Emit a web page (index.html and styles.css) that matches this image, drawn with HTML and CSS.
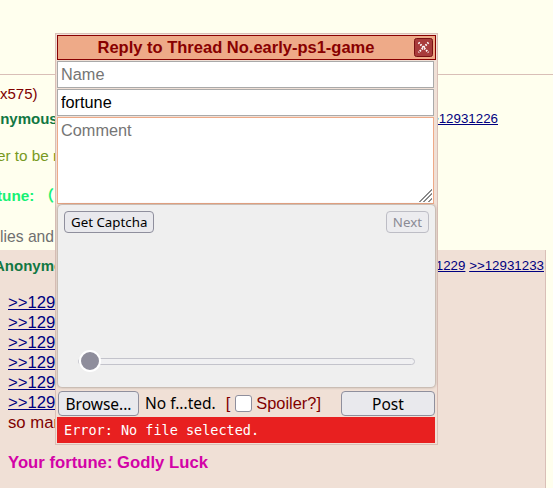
FILE: index.html
```html
<!DOCTYPE html>
<html>
<head>
<meta charset="utf-8">
<link rel="stylesheet" href="styles.css">
</head>
<body>
<div class="thread">
  <div class="board-top"></div>
  <hr class="sep">
  <div class="op">
    <div class="file-info">x575)</div>
    <div class="post-info">
      <span class="name op-name">Anonymous</span>
      <span class="dateline">01/13/24(Sat)18:22 No.12931217</span>
      <span class="backlink op-backlink"><a href="#">&gt;&gt;12931226</a></span>
    </div>
    <div class="op-msg">
      <div class="greentext">er to be remembered as the best</div>
      <div class="fortune-ok">tune: （　´_ゝ`）ﾌｰﾝ</div>
    </div>
    <div class="summary">lies and 2 images omitted. Click here to view.</div>
  </div>
  <div class="reply">
    <div class="reply-info">
      <span class="name reply-name">Anonymous</span>
      <span class="dateline">01/13/24(Sat)18:40 No.12931240</span>
      <span class="backlink reply-backlinks"><a href="#">&gt;&gt;12931229</a> <a href="#">&gt;&gt;12931233</a></span>
    </div>
    <blockquote class="reply-msg">
      <a href="#">&gt;&gt;12931180</a><br>
      <a href="#">&gt;&gt;12931185</a><br>
      <a href="#">&gt;&gt;12931191</a><br>
      <a href="#">&gt;&gt;12931198</a><br>
      <a href="#">&gt;&gt;12931204</a><br>
      <a href="#">&gt;&gt;12931210</a><br>
      so many good games back then<br>
      <br>
      <b class="godly">Your fortune: Godly Luck</b>
    </blockquote>
  </div>
</div>

<form class="qr">
  <div class="qr-head">
    <span class="qr-title">Reply to Thread No.early-ps1-game</span>
    <button type="button" class="qr-close" aria-label="Close">
      <svg width="19" height="19" viewBox="0 0 19 19">
        <rect x="0.5" y="0.5" width="18" height="18" rx="2" fill="#a83b3b" stroke="#7a1212"/>
        <path d="M4.5 4.5L14.5 14.5M14.5 4.5L4.5 14.5" stroke="#ffffff" stroke-width="2" stroke-dasharray="1.5 1.2"/>
      </svg>
    </button>
  </div>
  <input class="field" type="text" placeholder="Name">
  <input class="field" type="text" value="fortune">
  <textarea class="field comment" placeholder="Comment"></textarea>
  <div class="captcha">
    <div class="cap-btns">
      <button type="button" class="cbtn">Get Captcha</button>
      <button type="button" class="cbtn" disabled>Next</button>
    </div>
    <div class="cap-slider">
      <input class="slider" type="range" min="0" max="100" value="0">
    </div>
  </div>
  <div class="file-row">
    <button type="button" class="sbtn browse">Browse...</button>
    <span class="nofile">No f...ted.</span>
    <label class="spoiler">[<input class="spoiler-box" type="checkbox">Spoiler?]</label>
    <button type="button" class="sbtn post">Post</button>
  </div>
  <div class="error">Error: No file selected.</div>
</form>
</body>
</html>
```

FILE: styles.css
```css
* { box-sizing: border-box; }
html, body { margin: 0; padding: 0; }
body {
  background: #ffffee;
  color: #800000;
  font-family: "Liberation Sans", Arial, sans-serif;
  height: 488px;
  overflow: hidden;
  position: relative;
}
a { color: #000080; text-decoration: underline; }

.board-top { height: 74px; }
.sep { border: 0; border-top: 1px solid #d9bfb7; margin: 0; height: 0; }

.file-info { margin-top: 9px; font-size: 15px; line-height: 19px; white-space: nowrap; }
.post-info { display: flex; margin-top: 6px; font-size: 15px; line-height: 19px; white-space: nowrap; }
.name { color: #117743; font-weight: bold; }
.dateline { margin-left: 5px; }
.op-name { margin-left: -29px; }
.backlink { font-size: 13.33px; }
.op-backlink { margin-left: auto; margin-right: 55px; }

.op-msg { margin: 18px 0 0 -3px; font-size: 15.3px; line-height: 20px; white-space: nowrap; }
.greentext { color: #789922; }
.fortune-ok {
  margin-top: 20px;
  color: #16f174;
  font-weight: bold;
  font-family: "Liberation Sans", "Noto Sans CJK JP", sans-serif;
}
.summary { margin-top: 21px; color: #707070; font-size: 15.7px; line-height: 19px; white-space: nowrap; }

.reply {
  margin-top: 4px;
  width: 546px;
  height: 238px;
  background: #f0e0d6;
  border-right: 1px solid #d9bfb7;
  padding: 6px 1px 0 0;
}
.reply-info { display: flex; font-size: 15px; line-height: 19px; white-space: nowrap; }
.reply-name { margin-left: -6px; }
.reply-backlinks { margin-left: auto; }
.reply-msg { margin: 18px 0 0 8px; font-size: 16.7px; line-height: 20px; white-space: nowrap; }
.godly { color: #d302a7; }

/* Quick reply window */
.qr {
  position: absolute;
  left: 55px;
  top: 33px;
  width: 383px;
  height: 412px;
  margin: 0;
  background: #f0e0d6;
  border: 1px solid #d9bfb7;
  padding: 1px;
  display: flex;
  flex-direction: column;
  font-family: "Liberation Sans", Arial, sans-serif;
  font-size: 16.4px;
  color: #800000;
}
.qr-head {
  height: 25px;
  flex: none;
  background: #eeaa88;
  border: 1px solid #880000;
  display: flex;
  align-items: center;
  padding-right: 2px;
}
.qr-title { flex: 1; text-align: center; font-weight: bold; font-size: 16.5px; color: #880000; }
.qr-close { width: 19px; height: 19px; padding: 0; border: 0; background: none; display: block; }
.qr-close svg { display: block; }

.field {
  display: block;
  flex: none;
  width: 377px;
  height: 27px;
  margin: 1px 0 0 0;
  border: 1px solid #aaaaaa;
  background: #ffffff;
  font-family: "Liberation Sans", Arial, sans-serif;
  font-size: 16.3px;
  color: #000;
  padding: 0 3px;
  outline: none;
}
.field::placeholder { color: #757575; }
.comment {
  height: 87px;
  border-color: #eeaa88;
  padding: 3px 3px;
  resize: none;
  background:
    linear-gradient(135deg, #ffffff 50%, transparent 50%) right 1px bottom 1px / 13px 13px no-repeat,
    repeating-linear-gradient(135deg, transparent 0 2px, #8a8a8a 2px 3.3px) right 1px bottom 1px / 13px 13px no-repeat,
    #ffffff;
}

.captcha {
  flex: none;
  width: 377px;
  height: 182px;
  margin: 1px 0 0 1px;
  background: #efefef;
  border-radius: 4px;
  box-shadow: 0 0 3px rgba(0, 0, 0, 0.45);
  display: flex;
  flex-direction: column;
  justify-content: space-between;
  padding: 6px 6px 15px;
}
.cap-btns { display: flex; justify-content: space-between; }
.cbtn {
  height: 22px;
  padding: 0 6px;
  border: 1px solid #8f8f9d;
  border-radius: 4px;
  background: #e9e9ed;
  font-family: "Noto Sans", sans-serif;
  font-size: 13.3px;
  line-height: 19px;
  color: #000;
}
.cbtn:disabled { color: #8a8a94; border-color: #bdbdc5; background: #ececef; }
.cap-slider { padding: 0 14px; height: 22px; }
.slider {
  -webkit-appearance: none;
  appearance: none;
  display: block;
  width: 100%;
  height: 22px;
  margin: 0;
  background: transparent;
}
.slider::-webkit-slider-runnable-track {
  height: 7px;
  border: 1px solid #c3c3cb;
  border-radius: 4px;
  background: #f0f0f2;
}
.slider::-webkit-slider-thumb {
  -webkit-appearance: none;
  appearance: none;
  width: 22px;
  height: 22px;
  margin-top: -8.5px;
  border-radius: 50%;
  background: #8f8e9c;
  border: 2px solid #ffffff;
}

.file-row { flex: none; display: flex; align-items: flex-start; height: 26px; margin-top: 4px; }
.sbtn {
  height: 25px;
  padding: 0;
  border: 1px solid #8f8f9d;
  border-radius: 4px;
  background: #e9e9ed;
  font-family: "Noto Sans", sans-serif;
  font-size: 15.5px;
  line-height: 22px;
  color: #000;
}
.browse { width: 81px; margin-left: 1px; }
.nofile { margin-left: 6px; font-family: "Noto Sans", sans-serif; font-size: 15.5px; line-height: 25px; color: #000; }
.spoiler { margin-left: 10px; display: flex; align-items: center; height: 25px; color: #800000; }
.spoiler-box {
  -webkit-appearance: none;
  appearance: none;
  width: 17px;
  height: 17px;
  margin: 0 4px 0 5px;
  border: 1px solid #8f8f9d;
  border-radius: 3px;
  background: #ffffff;
}
.post { width: 94px; margin-left: auto; margin-right: 1px; }

.error {
  flex: none;
  width: 378px;
  height: 26px;
  background: #e82020;
  color: #ffffff;
  font-family: "DejaVu Sans Mono", monospace;
  font-size: 13.5px;
  line-height: 26px;
  padding-left: 7px;
}
```
